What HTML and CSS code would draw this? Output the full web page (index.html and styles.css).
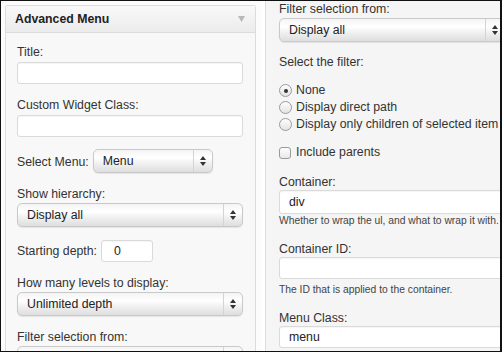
FILE: index.html
```html
<!DOCTYPE html>
<html>
<head>
<meta charset="utf-8">
<link rel="stylesheet" href="styles.css">
</head>
<body>
<div class="frame">
  <div class="pane-left">
    <div class="widget">
      <div class="widget-head">
        <span class="widget-title">Advanced Menu</span>
        <span class="widget-toggle"><svg width="7" height="6" viewBox="0 0 7 6"><path d="M0 0h7L3.5 6z" fill="#b8b8b8"/></svg></span>
      </div>
      <div class="widget-body">
        <div class="field">
          <div class="label">Title:</div>
          <div class="input"></div>
        </div>
        <div class="field">
          <div class="label">Custom Widget Class:</div>
          <div class="input"></div>
        </div>
        <div class="field inline">
          <div class="label">Select Menu:</div>
          <div class="select select-menu"><span class="select-text">Menu</span><span class="select-arrow"><svg width="6" height="10" viewBox="0 0 6 10"><path d="M0 4L3 0L6 4z M0 6L3 10L6 6z" fill="#333"/></svg></span></div>
        </div>
        <div class="field">
          <div class="label">Show hierarchy:</div>
          <div class="select"><span class="select-text">Display all</span><span class="select-arrow"><svg width="6" height="10" viewBox="0 0 6 10"><path d="M0 4L3 0L6 4z M0 6L3 10L6 6z" fill="#333"/></svg></span></div>
        </div>
        <div class="field inline">
          <div class="label">Starting depth:</div>
          <div class="input input-small">0</div>
        </div>
        <div class="field">
          <div class="label">How many levels to display:</div>
          <div class="select"><span class="select-text">Unlimited depth</span><span class="select-arrow"><svg width="6" height="10" viewBox="0 0 6 10"><path d="M0 4L3 0L6 4z M0 6L3 10L6 6z" fill="#333"/></svg></span></div>
        </div>
        <div class="field">
          <div class="label">Filter selection from:</div>
          <div class="select"><span class="select-text"></span><span class="select-arrow"></span></div>
        </div>
      </div>
    </div>
  </div>
  <div class="pane-right">
    <div class="widget-cont">
      <div class="field">
        <div class="label">Filter selection from:</div>
        <div class="select select-wide"><span class="select-text">Display all</span><span class="select-arrow"><svg width="6" height="10" viewBox="0 0 6 10"><path d="M0 4L3 0L6 4z M0 6L3 10L6 6z" fill="#333"/></svg></span></div>
      </div>
      <div class="label">Select the filter:</div>
      <div class="radios">
        <div class="option"><span class="radio checked"></span>None</div>
        <div class="option"><span class="radio"></span>Display direct path</div>
        <div class="option"><span class="radio"></span>Display only children of selected item</div>
      </div>
      <div class="option check-row"><span class="checkbox"></span>Include parents</div>
      <div class="field field-help">
        <div class="label">Container:</div>
        <div class="input input-wide input-tall">div</div>
        <div class="help help-tight">Whether to wrap the ul, and what to wrap it with.</div>
      </div>
      <div class="field field-help">
        <div class="label">Container ID:</div>
        <div class="input input-wide"></div>
        <div class="help">The ID that is applied to the container.</div>
      </div>
      <div class="field">
        <div class="label">Menu Class:</div>
        <div class="input input-wide">menu</div>
      </div>
    </div>
  </div>
</div>
</body>
</html>
```
FILE: styles.css
```css
* { box-sizing: border-box; }
html, body { margin: 0; padding: 0; background: #fff; }
body {
  font-family: "Liberation Sans", Arial, Helvetica, sans-serif;
  font-size: 12.3px;
  color: #333;
}
.frame {
  width: 502px;
  height: 352px;
  border: 1px solid #111;
  border-right-width: 2px;
  display: flex;
  overflow: hidden;
  background: #fff;
}
.pane-left {
  width: 261px;
  flex: none;
  padding: 4px 0 0 4px;
  background: #fcfcfc;
}
.widget {
  width: 251px;
  height: 100%;
  border: 1px solid #dcdcdc;
  border-bottom: none;
  border-radius: 3px 3px 0 0;
  background: #f8f8f8;
  display: flex;
  flex-direction: column;
}
.widget-head {
  height: 27px;
  flex: none;
  border-bottom: 1px solid #dcdcdc;
  background: linear-gradient(#f9f9f9, #ececec);
  display: flex;
  align-items: center;
  justify-content: space-between;
  padding: 0 10px 0 9px;
}
.widget-title { font-weight: bold; color: #222; }
.widget-toggle { display: flex; }
.widget-body { padding: 11px 12px 0 11px; }
.field { margin-bottom: 13px; }
.field.inline { display: flex; align-items: center; }
.label { line-height: 16px; height: 16px; margin-bottom: 2px; color: #333; white-space: nowrap; }
.field.inline .label { margin: 0 4px 0 0; }
.input {
  height: 22px;
  background: #fff;
  border: 1px solid #dadada;
  border-radius: 3px;
  box-shadow: inset 0 1px 1px rgba(0,0,0,0.04);
  padding: 0 9px;
  line-height: 20px;
  color: #222;
}
.input-small { width: 52px; padding: 0 12px; }
.select {
  height: 24px;
  border: 1px solid #c9c9c9;
  border-radius: 5px;
  background: linear-gradient(#f4f4f4, #ffffff 35%, #f1f1f1 60%, #dedede);
  box-shadow: 0 1px 1px rgba(0,0,0,0.08);
  display: flex;
  align-items: center;
  justify-content: space-between;
  overflow: hidden;
}
.label + .select { margin-top: -1px; }
.select-text { padding-left: 9px; color: #222; white-space: nowrap; }
.select-arrow {
  width: 19px;
  height: 100%;
  border-left: 1px solid #d4d4d4;
  display: flex;
  align-items: center;
  justify-content: center;
}
.select-menu { width: 120px; }
.pane-right {
  flex: 1;
  padding-left: 3px;
  background: #fff;
  min-width: 0;
}
.widget-cont {
  height: 100%;
  border-left: 1px solid #dcdcdc;
  background: #f5f5f5;
  padding: 0 0 0 13px;
  width: 260px;
}
.select-wide { width: 226px; }
.widget-cont .field { margin-bottom: 12px; }
.widget-cont .field-help { margin-bottom: 14px; }
.widget-cont > .label { margin-bottom: 0; }
.radios { margin-top: 12px; margin-bottom: 11px; }
.option { display: flex; align-items: center; height: 17px; line-height: 17px; white-space: nowrap; color: #333; }
.radio {
  width: 13px; height: 13px;
  border: 1px solid #9a9a9a;
  border-radius: 50%;
  background: linear-gradient(#fdfdfd, #e4e4e4);
  margin-right: 4px;
  flex: none;
  display: flex; align-items: center; justify-content: center;
}
.radio.checked::after {
  content: "";
  width: 4px; height: 4px; border-radius: 50%;
  background: #333;
}
.checkbox {
  width: 12px; height: 12px;
  border: 1px solid #9a9a9a;
  border-radius: 3px;
  background: linear-gradient(#fdfdfd, #e8e8e8);
  margin-right: 5px;
  flex: none;
}
.check-row { margin-bottom: 13px; }
.widget-cont .field .label { margin-bottom: 0; }
.widget-cont .field .label + .select { margin-top: 1px; }
.input-wide { width: 240px; }
.input-tall { height: 24px; line-height: 22px; }
.help { font-size: 10.3px; line-height: 12px; margin-top: 5px; color: #444; white-space: nowrap; }
.help-tight { margin-top: 1px; }
```
